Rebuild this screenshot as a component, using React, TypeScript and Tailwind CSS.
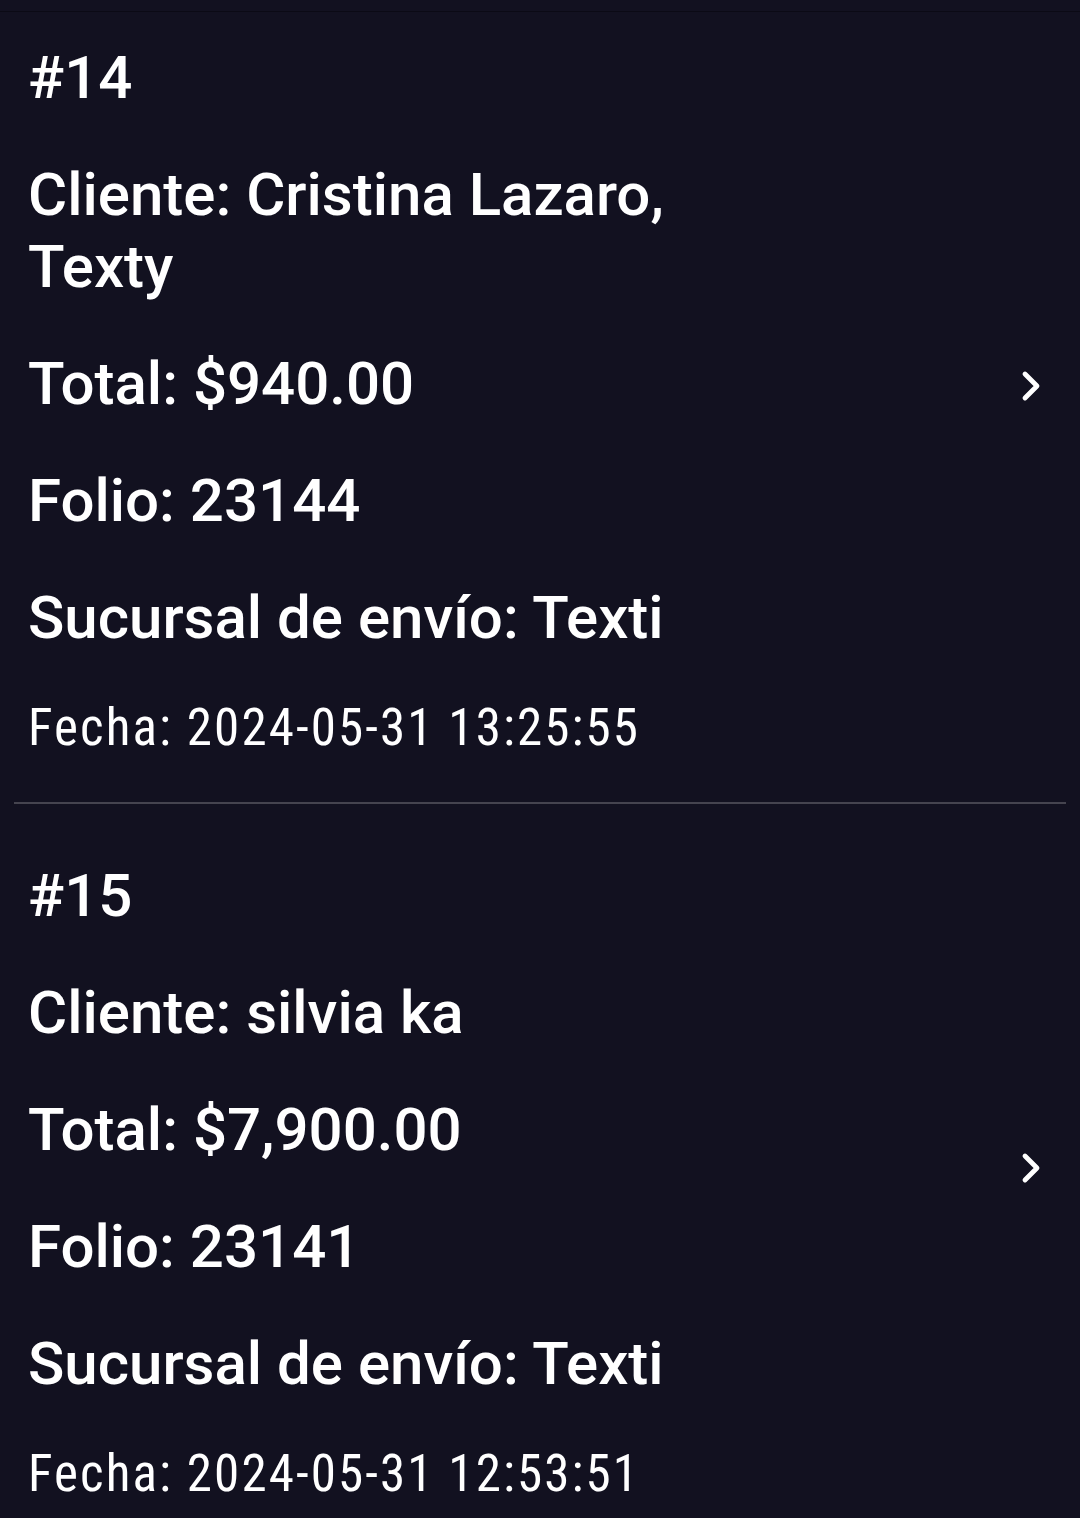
import { ChevronRight } from "lucide-react";

type Pedido = {
  num: number;
  cliente: string;
  total: string;
  folio: string;
  sucursal: string;
  fecha: string;
};

const pedidos: Pedido[] = [
  {
    num: 14,
    cliente: "Cristina Lazaro, Texty",
    total: "$940.00",
    folio: "23144",
    sucursal: "Texti",
    fecha: "2024-05-31 13:25:55",
  },
  {
    num: 15,
    cliente: "silvia ka",
    total: "$7,900.00",
    folio: "23141",
    sucursal: "Texti",
    fecha: "2024-05-31 12:53:51",
  },
];

const PedidoItem = ({ p, first }: { p: Pedido; first: boolean }) => {
  return (
    <div className={`flex pl-[28px] pr-[25px] pb-[45px] ${first ? "pt-[30px]" : "pt-[56px]"}`}>
      <div className="w-[700px] flex flex-col gap-[45px] font-medium">
        <p className="text-[60px] leading-[72px]">#{p.num}</p>
        <p className="text-[60px] leading-[72px]">Cliente: {p.cliente}</p>
        <p className="text-[60px] leading-[72px]">Total: {p.total}</p>
        <p className="text-[60px] leading-[72px]">Folio: {p.folio}</p>
        <p className="text-[60px] leading-[72px]">Sucursal de envío: {p.sucursal}</p>
        <p className="text-[51px] leading-[58px] font-normal font-stretch-condensed tracking-[2.1px]">
          Fecha: {p.fecha}
        </p>
      </div>
      <div className="ml-auto self-center mb-[28px]">
        <ChevronRight size={48} strokeWidth={2.4} className="text-white" />
      </div>
    </div>
  );
};

export default function App() {
  return (
    <div className="h-[1518px] overflow-hidden bg-[#121120] text-white font-['Roboto',sans-serif]">
      <div className="h-[12px] border-b border-[#0b0a15]" />
      {pedidos.map((p, i) => (
        <div key={p.num}>
          {i > 0 && <div className="mx-[14px] h-[2px] bg-[#45444f]" />}
          <PedidoItem p={p} first={i === 0} />
        </div>
      ))}
    </div>
  );
}
